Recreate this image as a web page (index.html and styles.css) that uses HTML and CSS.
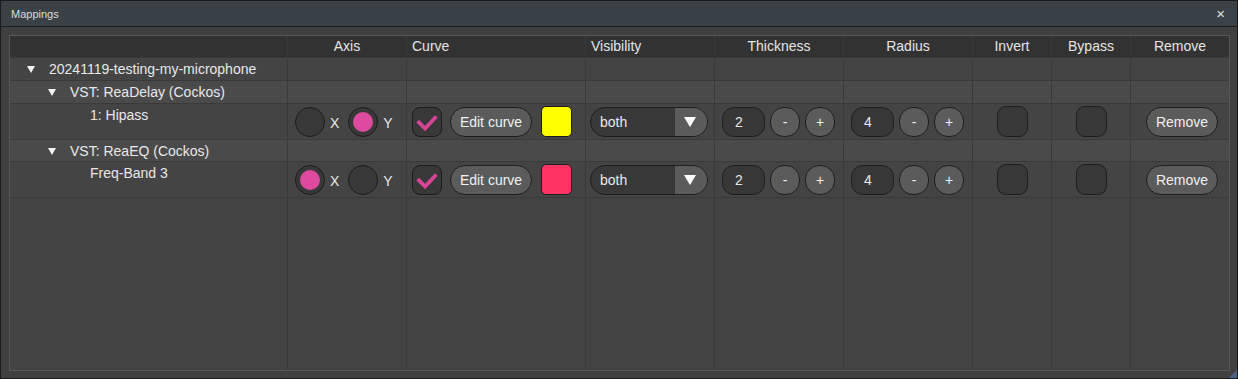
FILE: index.html
```html
<!DOCTYPE html>
<html lang="en">
<head>
  <meta charset="UTF-8">
  <title>Mappings</title>
  <link rel="stylesheet" href="styles.css">
</head>
<body>
  <div class="window">
    <div class="titlebar">
      <span class="title">Mappings</span>
      <span class="close">&times;</span>
    </div>
    <div class="content">
      <div class="mappings">
        <!-- header -->
        <div class="row head">
          <div class="cell"></div>
          <div class="cell center">Axis</div>
          <div class="cell">Curve</div>
          <div class="cell">Visibility</div>
          <div class="cell center">Thickness</div>
          <div class="cell center">Radius</div>
          <div class="cell center">Invert</div>
          <div class="cell center">Bypass</div>
          <div class="cell center">Remove</div>
        </div>

        <!-- project -->
        <div class="row">
          <div class="cell label lvl0"><span class="twisty"></span>20241119-testing-my-microphone</div>
          <div class="cell"></div><div class="cell"></div><div class="cell"></div><div class="cell"></div>
          <div class="cell"></div><div class="cell"></div><div class="cell"></div><div class="cell"></div>
        </div>

        <!-- ReaDelay -->
        <div class="row alt">
          <div class="cell label lvl1"><span class="twisty"></span>VST: ReaDelay (Cockos)</div>
          <div class="cell"></div><div class="cell"></div><div class="cell"></div><div class="cell"></div>
          <div class="cell"></div><div class="cell"></div><div class="cell"></div><div class="cell"></div>
        </div>
        <div class="row">
          <div class="cell label lvl2">1: Hipass</div>
          <div class="cell axis">
            <span class="radio"></span><span class="axis-name">X</span>
            <span class="radio on"></span><span class="axis-name">Y</span>
          </div>
          <div class="cell curve">
            <span class="check">
              <svg width="30" height="30" viewBox="0 0 30 30"><path d="M5 14 L13 22 L25 9" stroke="#d84497" stroke-width="4" fill="none"/></svg>
            </span>
            <button class="btn edit">Edit curve</button>
            <span class="swatch yellow"></span>
          </div>
          <div class="cell vis">
            <div class="combo"><span class="combo-text">both</span><span class="combo-arrow"><svg width="12" height="10" viewBox="0 0 12 10"><polygon points="0,0 12,0 6,10" fill="#fff"/></svg></span></div>
          </div>
          <div class="cell spin">
            <span class="num">2</span><button class="btn round">-</button><button class="btn round">+</button>
          </div>
          <div class="cell spin">
            <span class="num">4</span><button class="btn round">-</button><button class="btn round">+</button>
          </div>
          <div class="cell center-box"><span class="toggle"></span></div>
          <div class="cell center-box"><span class="toggle"></span></div>
          <div class="cell center-box"><button class="btn remove">Remove</button></div>
        </div>

        <!-- ReaEQ -->
        <div class="row alt">
          <div class="cell label lvl1"><span class="twisty"></span>VST: ReaEQ (Cockos)</div>
          <div class="cell"></div><div class="cell"></div><div class="cell"></div><div class="cell"></div>
          <div class="cell"></div><div class="cell"></div><div class="cell"></div><div class="cell"></div>
        </div>
        <div class="row">
          <div class="cell label lvl2">Freq-Band 3</div>
          <div class="cell axis">
            <span class="radio on"></span><span class="axis-name">X</span>
            <span class="radio"></span><span class="axis-name">Y</span>
          </div>
          <div class="cell curve">
            <span class="check">
              <svg width="30" height="30" viewBox="0 0 30 30"><path d="M5 14 L13 22 L25 9" stroke="#d84497" stroke-width="4" fill="none"/></svg>
            </span>
            <button class="btn edit">Edit curve</button>
            <span class="swatch red"></span>
          </div>
          <div class="cell vis">
            <div class="combo"><span class="combo-text">both</span><span class="combo-arrow"><svg width="12" height="10" viewBox="0 0 12 10"><polygon points="0,0 12,0 6,10" fill="#fff"/></svg></span></div>
          </div>
          <div class="cell spin">
            <span class="num">2</span><button class="btn round">-</button><button class="btn round">+</button>
          </div>
          <div class="cell spin">
            <span class="num">4</span><button class="btn round">-</button><button class="btn round">+</button>
          </div>
          <div class="cell center-box"><span class="toggle"></span></div>
          <div class="cell center-box"><span class="toggle"></span></div>
          <div class="cell center-box"><button class="btn remove">Remove</button></div>
        </div>

        <!-- empty space below -->
        <div class="row filler">
          <div class="cell"></div><div class="cell"></div><div class="cell"></div><div class="cell"></div><div class="cell"></div>
          <div class="cell"></div><div class="cell"></div><div class="cell"></div><div class="cell"></div>
        </div>
      </div>
    </div>
    <span class="grip"></span>
  </div>
</body>
</html>
```

FILE: styles.css
```css
/* window */
body {
  margin: 0;
  background: #1e1e1e;
  font-family: 'Liberation Sans', Arial, sans-serif;
  font-size: 14px;
  color: #e8e8e8;
}
.window {
  position: relative;
  width: 1238px;
  height: 379px;
  box-sizing: border-box;
  border: 1px solid #1b1b1b;
  background: #404040;
  display: flex;
  flex-direction: column;
}
.titlebar {
  height: 25px;
  border-bottom: 1px solid #1c1c1c;
  background: #3a4147;
  display: flex;
  align-items: center;
  justify-content: space-between;
  padding: 0 12px 0 10px;
}
.title {
  font-size: 11px;
  color: #dcdcdc;
}
.close {
  font-size: 15px;
  color: #e0e0e0;
}
.content {
  flex: 1;
  padding: 8px 7px 7px 8px;
}

/* mapping grid */
.mappings {
  display: grid;
  grid-template-columns: 278px 119px 179px 129px 129px 129px 79px 79px 98px;
  grid-template-rows: 22px 23px 23px 36px 22px 36px 1fr;
  width: 1219px;
  height: 334px;
  border: 1px solid #575757;
  background: #434343;
}
.row {
  display: contents;
}
.cell {
  box-sizing: border-box;
  border-right: 1px solid #3a3a3a;
  border-bottom: 1px solid #3a3a3a;
  background: #444;
  min-width: 0;
  white-space: nowrap;
}
.cell:nth-child(9) {
  border-right: none;
}
.row.alt .cell {
  background: #4a4a4a;
}
.head .cell {
  background: #323232;
  color: #e4e4e4;
  line-height: 21px;
  padding-left: 5px;
}
.head .cell.center {
  text-align: center;
  padding-left: 0;
}
.filler .cell {
  background: #434343;
  border-bottom: none;
}

/* tree labels */
.label {
  line-height: 22px;
  display: flex;
  align-items: flex-start;
}
.lvl0 { padding-left: 17px; }
.lvl1 { padding-left: 38px; }
.lvl2 { padding-left: 80px; }
.twisty {
  width: 0;
  height: 0;
  margin: 8px 14px 0 0;
  border-left: 4px solid transparent;
  border-right: 4px solid transparent;
  border-top: 7px solid #f2f2f2;
}

/* widgets */
.axis, .curve, .vis, .spin, .center-box {
  display: flex;
  align-items: center;
}
.axis { padding-left: 7px; }
.radio {
  width: 28px;
  height: 28px;
  border-radius: 50%;
  border: 1px solid #1c1c1c;
  background: #383838;
  display: flex;
  align-items: center;
  justify-content: center;
}
.radio.on::after {
  content: "";
  width: 20px;
  height: 20px;
  border-radius: 50%;
  background: #de4a9e;
}
.axis-name {
  margin: 0 9px 0 5px;
  padding-top: 3px;
}
.curve { padding-left: 5px; }
.check {
  width: 28px;
  height: 28px;
  border-radius: 8px;
  border: 1px solid #1c1c1c;
  background: #383838;
  display: flex;
  align-items: center;
  justify-content: center;
}
.btn {
  font-family: inherit;
  font-size: 14px;
  color: #f0f0f0;
  background: #5b5b5b;
  border: 1px solid #1e1e1e;
  border-radius: 15px;
  height: 30px;
  padding: 0;
}
.edit {
  width: 82px;
  margin-left: 8px;
}
.swatch {
  width: 29px;
  height: 29px;
  margin-left: 9px;
  border: 1px solid #1e1e1e;
  border-radius: 5px;
}
.yellow { background: #ffff00; }
.red { background: #ff3464; }
.vis { padding-left: 4px; }
.combo {
  width: 118px;
  height: 30px;
  box-sizing: border-box;
  border: 1px solid #1e1e1e;
  border-radius: 15px;
  background: #383838;
  display: flex;
  overflow: hidden;
}
.combo-text {
  flex: 1;
  padding-left: 9px;
  line-height: 28px;
}
.combo-arrow {
  width: 30px;
  background: #5b5b5b;
  display: flex;
  align-items: center;
  justify-content: center;
  padding-right: 2px;
}
.spin {
  padding-left: 7px;
  gap: 5px;
}
.num {
  width: 41px;
  height: 28px;
  border: 1px solid #1e1e1e;
  border-radius: 12px;
  background: #373737;
  line-height: 28px;
  padding-left: 0;
  text-indent: 12px;
}
.round {
  width: 30px;
  border-radius: 14px;
}
.center-box {
  justify-content: center;
}
.toggle {
  width: 29px;
  height: 29px;
  border: 1px solid #1e1e1e;
  border-radius: 9px;
  background: #383838;
}
.remove {
  width: 72px;
  margin-left: 4px;
}

/* resize grip */
.grip {
  position: absolute;
  right: 0;
  bottom: 0;
  width: 0;
  height: 0;
  border-left: 8px solid transparent;
  border-bottom: 8px solid #4a6486;
}
```
